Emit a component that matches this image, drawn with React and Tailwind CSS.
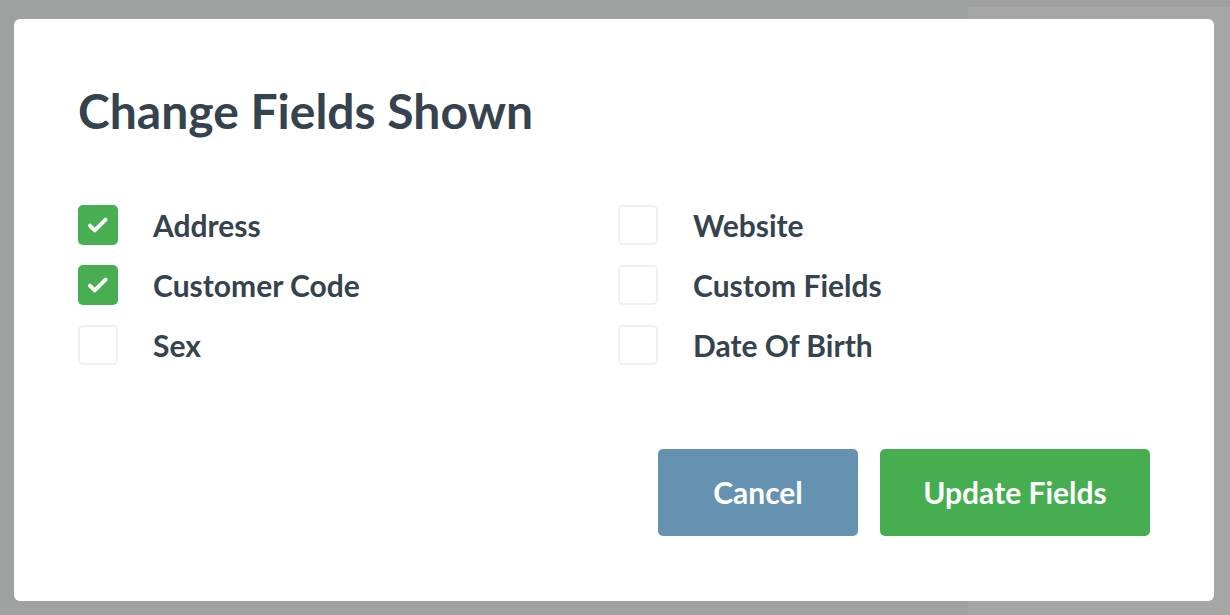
import { useState } from "react";

const fields = [
  ["Address", "Website"],
  ["Customer Code", "Custom Fields"],
  ["Sex", "Date Of Birth"],
];

const Check = ({ label, checked, onToggle }) => (
  <label className="flex items-center h-[40px] cursor-pointer">
    <span
      onClick={onToggle}
      className={
        checked
          ? "w-[40px] h-[40px] rounded-[5px] bg-[#47ae52] flex items-center justify-center"
          : "w-[40px] h-[40px] rounded-[5px] border-2 border-[#eef0f2] bg-white"
      }
    >
      {checked && (
        <svg width="26" height="26" viewBox="0 0 24 24" fill="none">
          <path d="M4.5 12.5l4.5 4.5 10-10" stroke="white" strokeWidth="3.6" strokeLinecap="round" strokeLinejoin="round" />
        </svg>
      )}
    </span>
    <span className="ml-[35px] text-[30px] font-bold text-[#35434e]">{label}</span>
  </label>
);

export default function App() {
  const [checked, setChecked] = useState({ Address: true, "Customer Code": true });
  const toggle = (k) => setChecked((c) => ({ ...c, [k]: !c[k] }));

  return (
    <div
      className="w-[1230px] h-[615px] bg-[#9fa1a1] relative overflow-hidden"
      style={{ fontFamily: "Lato, 'Open Sans', sans-serif" }}
    >
      <div className="absolute left-[968px] top-[7px] right-0 bottom-0 bg-[#a6a6a6]" />
      <div className="absolute left-[14px] top-[19px] w-[1200px] h-[582px] bg-white rounded-[6px] px-[64px] pt-[68px]">
        <h1 className="text-[48px] font-bold text-[#35434e] leading-none">Change Fields Shown</h1>
        <div className="mt-[70px] grid grid-cols-[540px_1fr] gap-y-[20px]">
          {fields.flat().map((f) => (
            <Check key={f} label={f} checked={!!checked[f]} onToggle={() => toggle(f)} />
          ))}
        </div>
        <div className="mt-[84px] flex justify-end gap-[22px]">
          <button className="w-[200px] h-[87px] rounded-[5px] bg-[#6592b0] text-white text-[30px] font-bold">
            Cancel
          </button>
          <button className="w-[270px] h-[87px] rounded-[5px] bg-[#46ae51] text-white text-[30px] font-bold">
            Update Fields
          </button>
        </div>
      </div>
    </div>
  );
}
